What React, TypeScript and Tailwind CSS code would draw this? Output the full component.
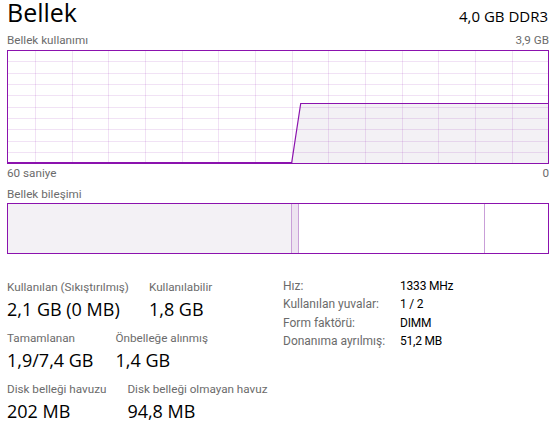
import React from "react";

const PURPLE = "#8b12ae";

function UsageGraph() {
  const w = 540;
  const h = 112;
  const vLines: number[] = [];
  for (let k = 0; k < 14; k++) vLines.push(Math.round(27 + 36.667 * k) + 0.5);
  const hLines: number[] = [];
  for (let k = 0; k < 9; k++) hLines.push(Math.round(10.3 + 11.33 * k) + 0.5);
  const x0 = 283.7;
  const x1 = 292.7;
  const yTop = 52.5;
  return (
    <svg width={w} height={h} viewBox={`0 0 ${w} ${h}`} className="block">
      <polygon points={`${x0},${h} ${x1},${yTop} ${w},${yTop} ${w},${h}`} fill="#f3f1f5" />
      {vLines.map((x) => (
        <line key={"v" + x} x1={x} y1={0} x2={x} y2={h} stroke="rgba(139,18,174,0.12)" strokeWidth={1} />
      ))}
      {hLines.map((y) => (
        <line key={"h" + y} x1={0} y1={y} x2={w} y2={y} stroke="rgba(139,18,174,0.12)" strokeWidth={1} />
      ))}
      <polyline points={`0,${h - 0.5} ${x0},${h - 0.5} ${x1},${yTop} ${w},${yTop}`} fill="none" stroke={PURPLE} strokeWidth={1.2} />
    </svg>
  );
}

const LABEL = "font-['Roboto',sans-serif] text-[11.7px] leading-[16px] text-[#6b6b6b] whitespace-nowrap";
const BIG = "font-['Open_Sans',sans-serif]";

function Stat({ label, value }: { label: string; value: string }) {
  return (
    <div className="flex flex-col">
      <div className={LABEL}>{label}</div>
      <div className={`${BIG} mt-[2px] text-[18px] leading-[24px] text-black whitespace-nowrap`}>{value}</div>
    </div>
  );
}

export default function App() {
  const details: [string, string][] = [
    ["Hız:", "1333 MHz"],
    ["Kullanılan yuvalar:", "1 / 2"],
    ["Form faktörü:", "DIMM"],
    ["Donanıma ayrılmış:", "51,2 MB"],
  ];
  return (
    <div
      className="w-[558px] h-[440px] bg-white pl-[7px] pr-[9px] text-black"
      style={{ fontFamily: "Roboto, 'Noto Sans', sans-serif" }}
    >
      <div className={`${BIG} flex justify-between items-baseline h-[27px] pt-[1px]`}>
        <div className="text-[25px] leading-[22px]">Bellek</div>
        <div className="text-[15px] leading-[20px] mr-[1px]">4,0 GB DDR3</div>
      </div>
      <div className={`flex justify-between mt-[5px] ${LABEL}`}>
        <span>Bellek kullanımı</span>
        <span>3,9 GB</span>
      </div>
      <div className="mt-[2px] h-[114px] border border-[#8b12ae]">
        <UsageGraph />
      </div>
      <div className={`flex justify-between mt-[1px] ${LABEL}`}>
        <span>60 saniye</span>
        <span>0</span>
      </div>
      <div className={`mt-[5px] ${LABEL}`}>Bellek bileşimi</div>
      <div className="mt-[1px] h-[51px] border border-[#8b12ae] flex">
        <div className="w-[283px] bg-[#f3f1f5]" />
        <div className="w-[8px] bg-[#eee3f1] border-l border-r border-[#c99fd8]" />
        <div className="w-[186px] border-r border-[#c99fd8]" />
        <div className="flex-1" />
      </div>
      <div className="mt-[25px] flex">
        <div className="w-[276px] flex flex-col gap-[9px]">
          <div className="flex gap-[20px]">
            <Stat label="Kullanılan (Sıkıştırılmış)" value="2,1 GB (0 MB)" />
            <Stat label="Kullanılabilir" value="1,8 GB" />
          </div>
          <div className="flex gap-[22px]">
            <Stat label="Tamamlanan" value="1,9/7,4 GB" />
            <Stat label="Önbelleğe alınmış" value="1,4 GB" />
          </div>
          <div className="flex gap-[21px]">
            <Stat label="Disk belleği havuzu" value="202 MB" />
            <Stat label="Disk belleği olmayan havuz" value="94,8 MB" />
          </div>
        </div>
        <div className="mt-[-2px] flex flex-col">
          {details.map(([k, v]) => (
            <div key={k} className="flex text-[12px] leading-[18.4px]">
              <span className="w-[117px] text-[#6b6b6b]">{k}</span>
              <span className="text-black tracking-[-0.2px]">{v}</span>
            </div>
          ))}
        </div>
      </div>
    </div>
  );
}
